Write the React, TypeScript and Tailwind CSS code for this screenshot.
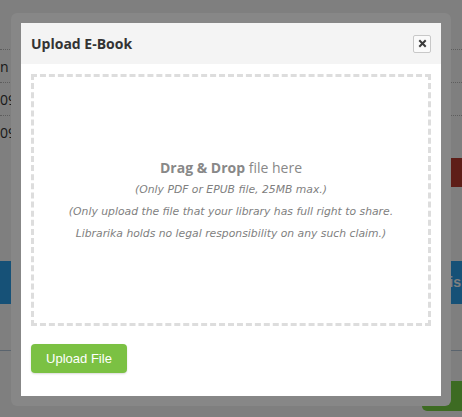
import React from 'react';

const CloseIcon: React.FC = () => (
  <svg width="9" height="9" viewBox="0 0 9 9">
    <path d="M2 2 L7 7 M7 2 L2 7" stroke="#3a3a3a" strokeWidth="2" strokeLinecap="square" />
  </svg>
);

export default function App() {
  return (
    <div className="relative h-[417px] w-full overflow-hidden bg-white font-['Liberation_Sans',Arial,sans-serif]">
      {/* Page behind the modal */}
      <div className="flex flex-col pt-[17px]">
        <div className="h-[33px] border-b border-dotted border-[#bbb]" />
        <div className="flex h-[33px] items-center border-b border-dotted border-[#bbb] text-[14px] text-[#333] font-['Open_Sans',sans-serif]">
          <span>n Co</span>
        </div>
        <div className="flex h-[33px] items-center border-b border-dotted border-[#bbb] text-[14px] text-[#333] font-['Open_Sans',sans-serif]">
          <span>09</span>
        </div>
        <div className="flex h-[33px] items-center text-[14px] text-[#333] font-['Open_Sans',sans-serif]">
          <span>09</span>
        </div>
        <div className="mt-[9px] flex justify-end">
          <div className="mr-[-20px] h-[29px] w-[60px] rounded-[5px] bg-[#bd3c30]" />
        </div>
        <div className="mt-[74px] flex h-[43px] items-center justify-end bg-[#2ca2ee] pr-[1px]">
          <span className="text-[14px] font-bold text-white">is</span>
        </div>
        <div className="mt-[46px] h-px w-full bg-[#b4c8dc]" />
        <div className="mt-[30px] flex justify-end">
          <div className="mr-[-20px] h-[30px] w-[60px] rounded-[5px] bg-[#7bd644]" />
        </div>
      </div>

      {/* Overlay */}
      <div className="absolute inset-0 bg-black/50">
        <div className="absolute left-[11px] top-[13px] h-[393px] w-[440px] rounded-[6px] bg-[#878787] p-[10px]">
          <div className="flex h-full flex-col bg-white font-['Open_Sans',sans-serif]">
            <div className="flex h-[41px] shrink-0 items-center justify-between bg-[#f4f4f4] px-[10px]">
              <h3 className="text-[14px] font-bold text-[#333]">Upload E-Book</h3>
              <button className="flex h-[18px] w-[18px] items-center justify-center rounded-[2px] border border-[#c8c8c8] bg-[#fafafa]">
                <CloseIcon />
              </button>
            </div>
            <div className="flex flex-col px-[10px] pt-[10px]">
              <div className="flex h-[252px] flex-col items-center justify-center border-[3px] border-dashed border-[#dddddd] pt-[2px] text-center text-[#888]">
                <p className="text-[14px] leading-[20px]">
                  <span className="font-bold">Drag &amp; Drop</span> file here
                </p>
                <p className="mt-[1px] text-[10.8px] italic leading-[22px] text-[#808080] font-['DejaVu_Sans',sans-serif]">(Only PDF or EPUB file, 25MB max.)</p>
                <p className="text-[10.8px] italic leading-[22px] text-[#808080] font-['DejaVu_Sans',sans-serif]">(Only upload the file that your library has full right to share.</p>
                <p className="text-[10.8px] italic leading-[22px] text-[#808080] font-['DejaVu_Sans',sans-serif]">Librarika holds no legal responsibility on any such claim.)</p>
              </div>
              <button className="mt-[18px] flex h-[29px] w-[96px] items-center justify-center rounded-[4px] bg-[#7bc143] text-[13px] text-white shadow-[0_1px_2px_rgba(0,0,0,0.15)] font-['Liberation_Sans',Arial,sans-serif]">
                Upload File
              </button>
            </div>
          </div>
        </div>
      </div>
    </div>
  );
}
